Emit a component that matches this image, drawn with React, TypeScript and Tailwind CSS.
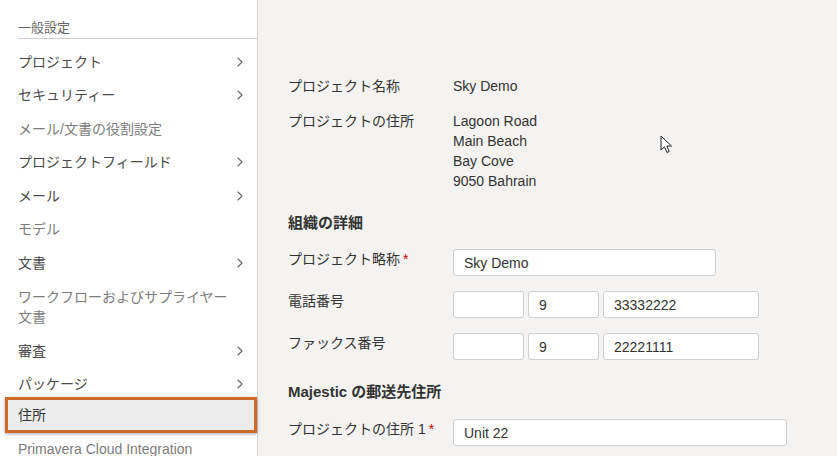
import { ChevronRight } from "lucide-react";

const FONT = {
  fontFamily: '"Liberation Sans", "Noto Sans CJK JP", Arial, sans-serif',
};

type NavItem = { label: string[]; chevron?: boolean; muted?: boolean; active?: boolean };

const NAV: NavItem[] = [
  { label: ["プロジェクト"], chevron: true },
  { label: ["セキュリティー"], chevron: true },
  { label: ["メール/文書の役割設定"], muted: true },
  { label: ["プロジェクトフィールド"], chevron: true },
  { label: ["メール"], chevron: true },
  { label: ["モデル"], muted: true },
  { label: ["文書"], chevron: true },
  { label: ["ワークフローおよびサプライヤー", "文書"], muted: true },
  { label: ["審査"], chevron: true },
  { label: ["パッケージ"], chevron: true },
  { label: ["住所"], active: true },
  { label: ["Primavera Cloud Integration"], muted: true },
];

function SideNav() {
  return (
    <aside className="flex w-[258px] shrink-0 flex-col border-r border-[#d4d4d4] bg-white">
      <div className="ml-[18px] mt-[19px] border-b border-[#cfcfcf] pb-[2px] text-[13px] leading-[17px] text-[#666]">
        一般設定
      </div>
      <ul className="mt-[6px]">
        {NAV.map((item, i) => {
          const tall = item.label.length > 1;
          if (item.active) {
            return (
              <li key={i} className="h-[35px] pl-[5px]">
                <div className="-mt-[4px] flex h-[36px] items-center border-[3px] border-[#cf6b28] bg-[#ececec] pl-[10px] text-[14px] text-[#333] shadow-[0_1px_3px_rgba(0,0,0,0.35)]">
                  {item.label[0]}
                </div>
              </li>
            );
          }
          return (
            <li
              key={i}
              className={`flex items-center justify-between pl-[18px] pr-[9px] text-[14px] leading-[20px] ${
                tall ? "h-[54.5px]" : "h-[33.5px]"
              } ${item.muted ? "text-[#7c7c7c]" : "text-[#4a4a4a]"}`}
            >
              <span className="whitespace-nowrap">
                {item.label.map((l, j) => (
                  <span key={j} className="block">
                    {l}
                  </span>
                ))}
              </span>
              {item.chevron ? (
                <ChevronRight size={16} strokeWidth={1.6} className="text-[#666]" />
              ) : null}
            </li>
          );
        })}
      </ul>
    </aside>
  );
}

function Field({ w, value }: { w: string; value?: string }) {
  return (
    <div
      className={`flex h-[27px] items-center rounded-[3px] border border-[#cfcfcf] bg-white px-[10px] text-[14px] text-[#333] ${w}`}
    >
      {value}
    </div>
  );
}

function Req() {
  return <span className="ml-[3px] text-[#c00]">*</span>;
}

function Cursor() {
  return (
    <svg
      className="absolute left-[660px] top-[135px]"
      width="14"
      height="20"
      viewBox="0 0 14 20"
    >
      <path
        d="M1 1 L1 15 L4.5 11.8 L7 17.5 L9.2 16.5 L6.8 11 L11.5 11 Z"
        fill="#fff"
        stroke="#222"
        strokeWidth="1"
        strokeLinejoin="round"
      />
    </svg>
  );
}

export default function App() {
  return (
    <div className="relative flex h-[456px] w-[837px] overflow-hidden bg-[#f4f3f2]" style={FONT}>
      <SideNav />
      <main className="flex-1 pl-[30px] pt-[76px] text-[14px] text-[#333]">
        <div className="grid grid-cols-[165px_1fr] gap-y-[15px] leading-[20px]">
          <span>プロジェクト名称</span>
          <span>Sky Demo</span>
          <span>プロジェクトの住所</span>
          <span>
            Lagoon Road
            <br />
            Main Beach
            <br />
            Bay Cove
            <br />
            9050 Bahrain
          </span>
        </div>

        <h2 className="mt-[22px] text-[15px] font-bold leading-[20px]">組織の詳細</h2>

        <div className="mt-[16px] grid grid-cols-[165px_1fr] items-start gap-y-[15px] leading-[20px]">
          <span>
            プロジェクト略称
            <Req />
          </span>
          <Field w="w-[263px]" value="Sky Demo" />
          <span>電話番号</span>
          <div className="flex gap-[4px]">
            <Field w="w-[71px]" />
            <Field w="w-[71px]" value="9" />
            <Field w="w-[156px]" value="33332222" />
          </div>
          <span>ファックス番号</span>
          <div className="flex gap-[4px]">
            <Field w="w-[71px]" />
            <Field w="w-[71px]" value="9" />
            <Field w="w-[156px]" value="22221111" />
          </div>
        </div>

        <h2 className="mt-[22px] text-[15px] font-bold leading-[20px]">Majestic の郵送先住所</h2>

        <div className="mt-[17px] grid grid-cols-[165px_1fr] items-start leading-[20px]">
          <span>
            プロジェクトの住所 1
            <Req />
          </span>
          <Field w="w-[334px]" value="Unit 22" />
        </div>
      </main>
      <Cursor />
    </div>
  );
}
